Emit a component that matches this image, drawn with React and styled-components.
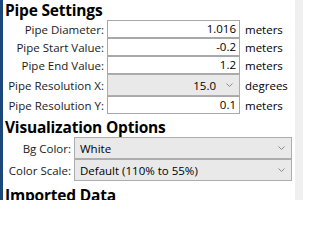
import styled, { createGlobalStyle } from "styled-components";

const GlobalStyle = createGlobalStyle`
  html, body {
    margin: 0;
    padding: 0;
    background: #ffffff;
    overflow: hidden;
  }
`;

const pipeRows = [
  { label: "Pipe Diameter:", value: "1.016", unit: "meters" },
  { label: "Pipe Start Value:", value: "-0.2", unit: "meters" },
  { label: "Pipe End Value:", value: "1.2", unit: "meters" },
  { label: "Pipe Resolution X:", value: "15.0", unit: "degrees", combo: true },
  { label: "Pipe Resolution Y:", value: "0.1", unit: "meters" },
];

const vizRows = [
  { label: "Bg Color:", value: "White" },
  { label: "Color Scale:", value: "Default (110% to 55%)" },
];

function Chevron() {
  return (
    <ChevronIcon width="7" height="4" viewBox="0 0 7 4">
      <polyline points="0.5,0.5 3.5,3.5 6.5,0.5" fill="none" stroke="#8a8a8a" strokeWidth="1" />
    </ChevronIcon>
  );
}

function App() {
  return (
    <>
      <GlobalStyle />
      <Window>
        <Strip />
        <Panel>
          <Heading $top={0}>Pipe Settings</Heading>
          <PipeGrid>
            {pipeRows.map((row) => (
              <Row key={row.label}>
                <Label>{row.label}</Label>
                {row.combo ? (
                  <Combo $align="right">
                    <ComboText>{row.value}</ComboText>
                    <Chevron />
                  </Combo>
                ) : (
                  <TextBox>{row.value}</TextBox>
                )}
                <Unit>{row.unit}</Unit>
              </Row>
            ))}
          </PipeGrid>
          <Heading $top={3}>Visualization Options</Heading>
          <VizGrid>
            {vizRows.map((row) => (
              <Row key={row.label}>
                <Label>{row.label}</Label>
                <Combo>
                  <ComboText>{row.value}</ComboText>
                  <Chevron />
                </Combo>
              </Row>
            ))}
          </VizGrid>
          <Heading $top={4}>Imported Data</Heading>
        </Panel>
        <Gutter />
      </Window>
    </>
  );
}

const Window = styled.div`
  display: flex;
  width: 303px;
  height: 200px;
  overflow: hidden;
  font-family: "Open Sans", "Noto Sans", sans-serif;
  color: #000000;
`;

const Strip = styled.div`
  flex: 0 0 3px;
  background: #1b477a;
`;

const Panel = styled.div`
  flex: 1;
  display: flex;
  flex-direction: column;
  background: #ffffff;
  overflow: hidden;
`;

const Gutter = styled.div`
  flex: 0 0 8px;
  background: #f0f0f0;
`;

const Heading = styled.h2`
  flex: 0 0 auto;
  margin: 0;
  padding: ${(p) => p.$top}px 0 0 2px;
  height: 20px;
  line-height: 20px;
  font-size: 15.5px;
  font-weight: 700;
  letter-spacing: -0.2px;
  white-space: nowrap;
`;

const PipeGrid = styled.div`
  display: grid;
  grid-template-columns: 104px 133px auto;
`;

const VizGrid = styled.div`
  display: grid;
  grid-template-columns: 71px 218px;
`;

const Row = styled.div`
  display: contents;
`;

const Label = styled.div`
  display: flex;
  align-items: center;
  justify-content: flex-end;
  padding-right: 3px;
  font-size: 11.5px;
  white-space: nowrap;
  color: #1a1a1a;
`;

const TextBox = styled.div`
  box-sizing: border-box;
  height: 18px;
  border: 1px solid #a8a8a8;
  background: #ffffff;
  padding: 0 3px;
  font-size: 11.5px;
  line-height: 16px;
  text-align: right;
`;

const Combo = styled.div`
  box-sizing: border-box;
  height: 22px;
  display: flex;
  align-items: center;
  justify-content: ${(p) => (p.$align === "right" ? "flex-end" : "space-between")};
  gap: 10px;
  padding: 0 6px 0 5px;
  border: 1px solid #adadad;
  background: #e9e9e9;
  font-size: 11.5px;
`;

const ComboText = styled.span`
  white-space: nowrap;
`;

const ChevronIcon = styled.svg`
  flex: 0 0 auto;
`;

const Unit = styled.div`
  display: flex;
  align-items: center;
  padding-left: 5px;
  font-size: 11.5px;
  white-space: nowrap;
`;

export default App;
